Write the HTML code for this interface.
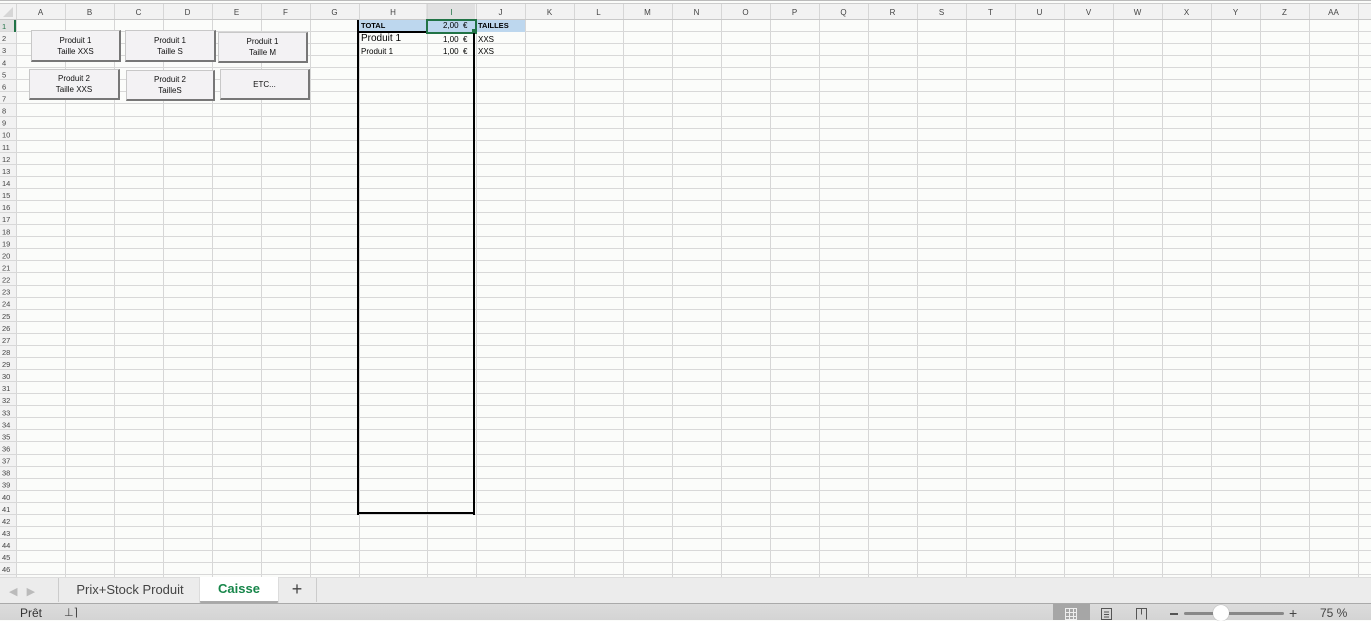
<!DOCTYPE html>
<html><head><meta charset="utf-8"><style>
body{margin:0;width:1371px;height:620px;overflow:hidden;background:#fbfcfa;font-family:"Liberation Sans",sans-serif;position:relative}
.a{position:absolute}
.btn{position:absolute;background:#f3f2f4;border:1px solid #c8c8c8;border-right:2px solid #777;border-bottom:2px solid #777;font-size:8px;text-align:center;line-height:11px;display:flex;align-items:center;justify-content:center;color:#111;box-sizing:border-box}
.t{position:absolute;font-size:8px;color:#000;white-space:nowrap}
</style></head><body>
<svg class="a" style="left:0;top:0" width="1371" height="620" id="g"></svg>
<div class="a" style="left:0;top:0;width:1371px;height:1px;background:#bbb"></div>
<div class="a" style="left:0;top:3px;width:1371px;height:1px;background:#ccc"></div>
<!-- selected cells -->
<div class="a" style="left:359px;top:20px;width:166px;height:12px;background:#bdd7ee"></div>
<div class="a" style="left:426px;top:19px;width:47px;height:11px;border:2px solid #217346;background:#bdd7ee"></div>
<div class="a" style="left:472px;top:29px;width:5px;height:5px;background:#217346"></div>
<div class="a" style="left:358px;top:31px;width:68px;height:2px;background:#000"></div>
<div class="a" style="left:357px;top:20px;width:2px;height:495px;background:#000"></div>
<div class="a" style="left:473px;top:33px;width:2px;height:482px;background:#000"></div>
<div class="a" style="left:357px;top:512px;width:118px;height:2px;background:#000"></div>
<div class="t" style="left:361px;top:21px;font-weight:bold;font-size:7.5px">TOTAL</div>
<div class="t" style="left:443px;top:21px">2,00 &nbsp;€</div>
<div class="t" style="left:478px;top:21px;font-weight:bold;font-size:7.5px">TAILLES</div>
<div class="t" style="left:361px;top:33px;font-size:10px">Produit 1</div>
<div class="t" style="left:443px;top:35px">1,00 &nbsp;€</div>
<div class="t" style="left:478px;top:35px">XXS</div>
<div class="t" style="left:361px;top:47px">Produit 1</div>
<div class="t" style="left:443px;top:47px">1,00 &nbsp;€</div>
<div class="t" style="left:478px;top:47px">XXS</div>
<div class="a" style="left:14px;top:20px;width:2px;height:12px;background:#217346"></div>
<div class="btn" style="left:31px;top:30px;width:90px;height:32px">Produit 1<br>Taille XXS</div>
<div class="btn" style="left:125px;top:30px;width:91px;height:32px">Produit 1<br>Taille S</div>
<div class="btn" style="left:218px;top:32px;width:90px;height:31px">Produit 1<br>Taille M</div>
<div class="btn" style="left:29px;top:69px;width:91px;height:31px">Produit 2<br>Taille XXS</div>
<div class="btn" style="left:126px;top:70px;width:89px;height:31px">Produit 2<br>TailleS</div>
<div class="btn" style="left:220px;top:69px;width:90px;height:31px">ETC...</div>
<!-- tab bar -->
<div class="a" style="left:0;top:577px;width:1371px;height:26px;background:#ececec;border-top:1px solid #ddd"></div>
<div class="a" style="left:9px;top:585px;color:#bbb;font-size:11px">◀ &nbsp;&nbsp;▶</div>
<div class="a" style="left:58px;top:578px;width:142px;height:24px;border-left:1px solid #ccc;font-size:13px;color:#444;line-height:23px;text-align:center">Prix+Stock Produit</div>
<div class="a" style="left:200px;top:577px;width:78px;height:24px;background:#fff;border-bottom:1px solid #aaa;box-shadow:0 1px 1px #999;font-size:13px;font-weight:bold;color:#17864a;line-height:24px;text-align:center">Caisse</div>
<div class="a" style="left:278px;top:578px;width:38px;height:24px;border-right:1px solid #ccc;font-size:18px;color:#444;line-height:23px;text-align:center">+</div>
<!-- status bar -->
<div class="a" style="left:0;top:603px;width:1371px;height:17px;background:linear-gradient(#aaa 0,#aaa 1px,#dcdcdc 1px,#d4d4d4)"></div>
<div class="a" style="left:20px;top:606px;font-size:12px;color:#333">Prêt</div>
<div class="a" style="left:64px;top:606px;font-size:11px;color:#444">⊥⌉</div>
<div class="a" style="left:1053px;top:604px;width:37px;height:16px;background:#a6a6a6"></div>
<svg class="a" style="left:1060px;top:606px" width="90" height="14"><g fill="none" stroke="#555"><rect x="5.5" y="2.5" width="11" height="11" stroke="#eee"/><path d="M9.5 2.5v11M13.5 2.5v11M5.5 6.5h11M5.5 10.5h11" stroke="#eee"/><rect x="41.5" y="2.5" width="10" height="11"/><path d="M44 6h5M44 8.5h5M44 11h5"/><path d="M76.5 13.5v-11h10v11M81.5 2.5v6"/></g></svg>
<div class="a" style="left:1170px;top:613px;width:8px;height:2px;background:#555"></div>
<div class="a" style="left:1184px;top:612px;width:100px;height:3px;background:#888;border-radius:2px"></div>
<div class="a" style="left:1213px;top:605px;width:16px;height:16px;background:#fff;border-radius:50%;box-shadow:0 0 1px #888"></div>
<div class="a" style="left:1289px;top:605px;font-size:14px;color:#444">+</div>
<div class="a" style="left:1320px;top:606px;font-size:12px;color:#444">75 %</div>
<script>
var s='',N='http://www.w3.org/2000/svg';
var cols=['A','B','C','D','E','F','G','H','I','J','K','L','M','N','O','P','Q','R','S','T','U','V','W','X','Y','Z','AA'];
var xs=[16];for(var i=0;i<27;i++){xs.push(xs[i]+(i==7?68:49));}
s+='<rect x="0" y="4" width="1371" height="16" fill="#f2f2f2"/>';
s+='<rect x="0" y="20" width="16" height="557" fill="#f2f2f2"/>';
s+='<rect x="426" y="4" width="49" height="16" fill="#e1e1e1"/>';
s+='<rect x="0" y="20" width="16" height="12" fill="#e1e1e1"/>';
s+='<path d="M3 17L13 7V17Z" fill="#d6d6d6"/>';
for(var i=0;i<xs.length;i++){s+='<line x1="'+(xs[i]+.5)+'" y1="4" x2="'+(xs[i]+.5)+'" y2="577" stroke="#d6d6d6"/>';}
for(var i=0;i<27;i++){var cx=(xs[i]+xs[i+1])/2;s+='<text x="'+cx+'" y="15" font-size="8" text-anchor="middle" fill="'+(i==8?'#217346':'#444')+'" font-family="Liberation Sans">'+cols[i]+'</text>';}
s+='<line x1="0" y1="19.5" x2="1371" y2="19.5" stroke="#c8c8c8"/>';
for(var r=1;r<=46;r++){var y=20+r*12.07;s+='<line x1="0" y1="'+(Math.round(y)-.5)+'" x2="1371" y2="'+(Math.round(y)-.5)+'" stroke="#d8d8d8"/>';
s+='<text x="2" y="'+(y-3)+'" font-size="7.5" fill="'+(r==1?'#217346':'#444')+'" font-family="Liberation Sans">'+r+'</text>';}
document.getElementById('g').innerHTML=s;
</script>
</body></html>
